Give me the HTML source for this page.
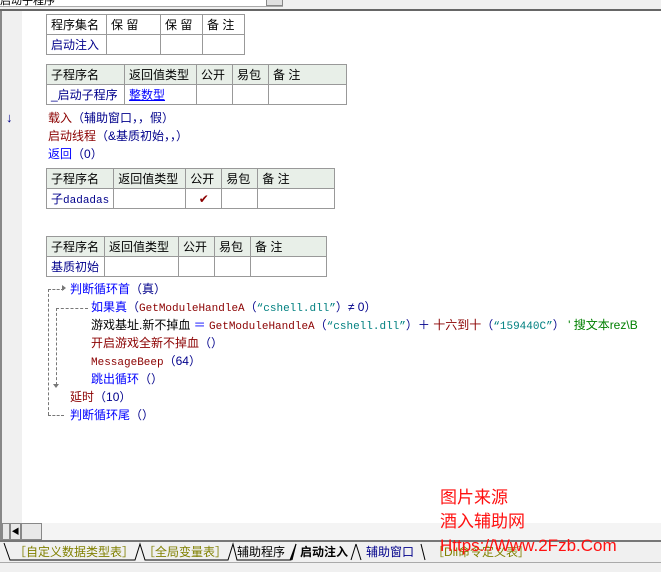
<!DOCTYPE html>
<html><head><meta charset="utf-8"><style>
*{margin:0;padding:0;box-sizing:border-box}
body{width:661px;height:572px;position:relative;overflow:hidden;background:#fff;font-family:"Liberation Sans","Noto Sans CJK SC","WenQuanYi Zen Hei",sans-serif;font-size:12px;color:#000}
.a{position:absolute;white-space:nowrap}
table{position:absolute;border-collapse:collapse;font-size:12px}
td{border:1px solid #999;height:20px;padding:0 4px;white-space:nowrap}
tr.h td{background:#e8efe8}
.bl{color:#00008b}.b{color:#0000ff}.r{color:#8b0000}.t{color:#008080}.g{color:#008000}
.m{font-family:"Liberation Mono","Noto Sans CJK SC",monospace;font-size:11px}
.tab{position:absolute;top:543px;height:18px;font-size:12px;line-height:18px}
</style></head><body>
<div class="a" style="left:0;top:0;width:661px;height:9px;background:#f0f0f0"></div>
<div class="a" style="left:0;top:0;width:283px;height:7px;background:#fff;border-bottom:1px solid #aaa;font-size:11px;line-height:2px;overflow:hidden">启动子程序</div>
<div class="a" style="left:266px;top:0;width:17px;height:6px;background:#e0e0e0;border:1px solid #888;border-top:none"></div>
<div class="a" style="left:0;top:9px;width:661px;height:2px;background:#666"></div>
<div class="a" style="left:0;top:11px;width:2px;height:530px;background:#888"></div>
<div class="a" style="left:2px;top:11px;width:20px;height:512px;background:#f0f0f0"></div>

<table style="left:46px;top:14px;width:199px">
<tr><td style="width:60px">程序集名</td><td style="width:54px">保 留</td><td style="width:42px">保 留</td><td>备 注</td></tr>
<tr><td class="bl">启动注入</td><td></td><td></td><td></td></tr></table>

<table style="left:46px;top:64px;width:301px">
<tr class="h"><td style="width:78px">子程序名</td><td style="width:72px">返回值类型</td><td style="width:36px">公开</td><td style="width:36px">易包</td><td>备 注</td></tr>
<tr><td class="bl">_启动子程序</td><td class="b" style="text-decoration:underline">整数型</td><td></td><td></td><td></td></tr></table>

<div class="a bl" style="left:6px;top:110px;font-size:13px">↓</div>
<div class="a" style="left:48px;top:109px"><span class="r">载入</span><span class="bl">（辅助窗口，，假）</span></div>
<div class="a" style="left:48px;top:127px"><span class="r">启动线程</span><span class="bl">（&amp;基质初始，，）</span></div>
<div class="a" style="left:48px;top:145px"><span class="b">返回</span><span class="bl">（0）</span></div>

<table style="left:46px;top:168px;width:289px">
<tr class="h"><td style="width:66px">子程序名</td><td style="width:72px">返回值类型</td><td style="width:36px">公开</td><td style="width:36px">易包</td><td>备 注</td></tr>
<tr><td class="bl">子<span class="m">dadadas</span></td><td></td><td style="text-align:center;color:#8b0000">✔</td><td></td><td></td></tr></table>

<table style="left:46px;top:236px;width:281px">
<tr class="h"><td style="width:58px">子程序名</td><td style="width:74px">返回值类型</td><td style="width:36px">公开</td><td style="width:36px">易包</td><td>备 注</td></tr>
<tr><td class="bl">基质初始</td><td></td><td></td><td></td><td></td></tr></table>

<div class="a" style="left:48px;top:289px;width:0;height:126px;border-left:1px dashed #777"></div>
<div class="a" style="left:48px;top:289px;width:16px;border-top:1px dashed #777"></div>
<div class="a" style="left:48px;top:415px;width:16px;border-top:1px dashed #777"></div>
<div class="a" style="left:62px;top:285px;width:0;height:0;border:3px solid transparent;border-left:4px solid #777"></div>
<div class="a" style="left:56px;top:308px;width:0;height:77px;border-left:1px dashed #777"></div>
<div class="a" style="left:56px;top:308px;width:32px;border-top:1px dashed #777"></div>
<div class="a" style="left:53px;top:384px;width:0;height:0;border:3px solid transparent;border-top:4px solid #777"></div>

<div class="a" style="left:70px;top:280px"><span class="b">判断循环首</span><span class="bl">（真）</span></div>
<div class="a" style="left:91px;top:298px"><span class="b">如果真</span><span class="bl">（</span><span class="r m">GetModuleHandleA</span><span class="bl">（</span><span class="t m">“cshell.dll”</span><span class="bl">）≠ 0）</span></div>
<div class="a" style="left:91px;top:316px">游戏基址.新不掉血 <span class="b">＝</span> <span class="r m">GetModuleHandleA</span><span class="bl">（</span><span class="t m">“cshell.dll”</span><span class="bl">）＋</span> <span class="r">十六到十</span><span class="bl">（</span><span class="t m">“159440C”</span><span class="bl">）</span> <span class="g">' 搜文本rez\B</span></div>
<div class="a" style="left:91px;top:334px"><span class="r">开启游戏全新不掉血</span><span class="bl">（）</span></div>
<div class="a" style="left:91px;top:352px"><span class="r m">MessageBeep</span><span class="bl">（64）</span></div>
<div class="a" style="left:91px;top:370px"><span class="b">跳出循环</span><span class="bl">（）</span></div>
<div class="a" style="left:70px;top:388px"><span class="r">延时</span><span class="bl">（10）</span></div>
<div class="a" style="left:70px;top:406px"><span class="b">判断循环尾</span><span class="bl">（）</span></div>

<div class="a" style="left:2px;top:523px;width:659px;height:17px;background:#f4f4f4"></div>
<div class="a" style="left:2px;top:523px;width:8px;height:17px;background:#e8e8e8;border:1px solid #888"></div>
<div class="a" style="left:10px;top:523px;width:11px;height:17px;background:#e8e8e8;border:1px solid #888;font-size:8px;line-height:15px;text-align:center">◀</div>
<div class="a" style="left:21px;top:523px;width:21px;height:17px;background:#e8e8e8;border:1px solid #888"></div>
<div class="a" style="left:0;top:540px;width:661px;height:2px;background:#777"></div>
<div class="a" style="left:0;top:542px;width:661px;height:20px;background:#f0f0f0"></div>
<svg class="a" style="left:0;top:542px" width="440" height="20"><g stroke="#000" fill="none" stroke-width="1"><path d="M4 1 L10 18 L135 18 L140 2 L145 18 L228 18 L233 2 L237 18 L291 18 L296 2 L290 18"/><path d="M296 2 L292 18 M356 2 L361 18 M356 2 L351 18 M421 2 L425 18"/></g></svg>
<div class="tab" style="left:14px;color:#808000">［自定义数据类型表］</div>
<div class="tab" style="left:143px;color:#808000">［全局变量表］</div>
<div class="tab" style="left:237px">辅助程序</div>
<div class="tab" style="left:300px;font-weight:bold">启动注入</div>
<div class="tab" style="left:366px;color:#00008b">辅助窗口</div>
<div class="tab" style="left:432px;color:#808000">［Dll命令定义表］</div>
<div class="a" style="left:0;top:562px;width:661px;height:10px;background:#f0f0f0;border-top:1px solid #aaa"></div>

<div class="a" style="left:440px;top:486px;color:#ff1010;font-size:17px;line-height:24px;z-index:10">图片来源<br>酒入辅助网<br>Https://Www.2Fzb.Com</div>
</body></html>
